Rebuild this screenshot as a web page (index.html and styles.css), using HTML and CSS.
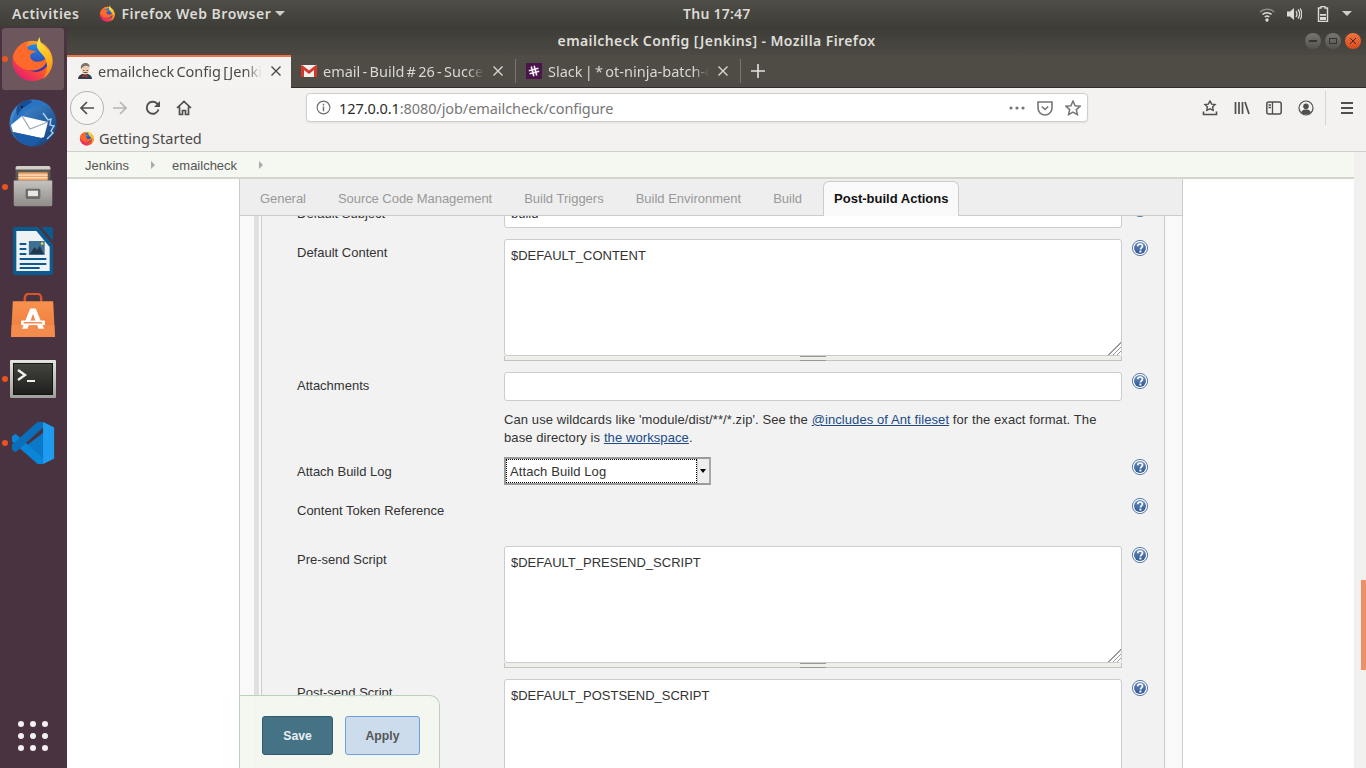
FILE: index.html
```html
<!DOCTYPE html>
<html lang="en">
<head>
    <meta charset="UTF-8">
    <title>emailcheck Config [Jenkins] - Mozilla Firefox</title>
    <link rel="stylesheet" href="styles.css">
</head>
<body>
    <svg class="sprites" width="0" height="0">
        <defs>
            <linearGradient id="fxBody" x1="0.8" y1="0.1" x2="0.2" y2="0.9">
                <stop offset="0" stop-color="#ffb02e"/>
                <stop offset="0.5" stop-color="#ff5a2b"/>
                <stop offset="1" stop-color="#e8226a"/>
            </linearGradient>
            <linearGradient id="fxTail" x1="0.3" y1="0" x2="0.5" y2="1">
                <stop offset="0" stop-color="#ffe93f"/>
                <stop offset="0.6" stop-color="#ffb31f"/>
                <stop offset="1" stop-color="#ff7a1f"/>
            </linearGradient>
            <linearGradient id="fxGlobe" x1="0.5" y1="0" x2="0.5" y2="1">
                <stop offset="0" stop-color="#1d8be8"/>
                <stop offset="1" stop-color="#3b2f9e"/>
            </linearGradient>
            <linearGradient id="tbBird" x1="0" y1="0" x2="1" y2="1">
                <stop offset="0" stop-color="#4a9be0"/>
                <stop offset="1" stop-color="#123a78"/>
            </linearGradient>
            <linearGradient id="helpFill" x1="0" y1="0" x2="0" y2="1">
                <stop offset="0" stop-color="#6d8fbe"/>
                <stop offset="1" stop-color="#2c5596"/>
            </linearGradient>
            <linearGradient id="bagFill" x1="0" y1="0" x2="0" y2="1">
                <stop offset="0" stop-color="#f8914f"/>
                <stop offset="1" stop-color="#ee7a3a"/>
            </linearGradient>
            <linearGradient id="drawerFill" x1="0" y1="0" x2="0" y2="1">
                <stop offset="0" stop-color="#c4c3bf"/>
                <stop offset="1" stop-color="#8d8c88"/>
            </linearGradient>
            <linearGradient id="termFrame" x1="0" y1="0" x2="0" y2="1">
                <stop offset="0" stop-color="#e4e4e1"/>
                <stop offset="1" stop-color="#9f9f9b"/>
            </linearGradient>
            <linearGradient id="termInner" x1="0" y1="0" x2="0" y2="1">
                <stop offset="0" stop-color="#43433f"/>
                <stop offset="1" stop-color="#1f1f1d"/>
            </linearGradient>
        </defs>
        <symbol id="firefox" viewBox="0 0 48 48">
            <circle cx="23.5" cy="26" r="21" fill="url(#fxBody)"/>
            <circle cx="27" cy="23" r="14.5" fill="url(#fxGlobe)"/>
            <path d="M3 22C5 13 11 8 19 6c-2 3-2 6 0 8 2 1 6 1 8 2-2 2-6 2-6 5 0 5 7 7 12 5 3-1 5-3 7-5-1 9-8 15-16 15C12 36 5 30 3 22z" fill="#ff6a2a"/>
            <path d="M31 1c0 6 3 8 7 12 5 5 7 11 6 17-1 7-5 12-10 15 5-6 6-14 3-21-2-5-8-8-9-13 0-4 1-7 3-10z" fill="url(#fxTail)"/>
        </symbol>
        <symbol id="help" viewBox="0 0 16 16">
            <circle cx="8" cy="8" r="7.6" fill="#fff" stroke="#2f5a9b" stroke-width="0.8"/>
            <circle cx="8" cy="8" r="6" fill="url(#helpFill)"/>
            <path d="M5.7 6.3C5.8 4.8 6.8 4 8.1 4c1.4 0 2.4.8 2.4 2.1 0 1.9-2 1.8-2 3.4" fill="none" stroke="#fff" stroke-width="1.7"/>
            <rect x="7.4" y="10.6" width="2" height="1.9" fill="#fff"/>
        </symbol>
        <symbol id="close" viewBox="0 0 12 12">
            <path d="M1.5 1.5l9 9M10.5 1.5l-9 9" stroke="currentColor" stroke-width="1.4" fill="none"/>
        </symbol>
    </svg>

    <header class="panel">
        <div class="panel-left">
            <span class="panel-text activities">Activities</span>
            <svg class="panel-fx"><use href="#firefox"/></svg>
            <span class="panel-text">Firefox Web Browser</span>
            <span class="caret"></span>
        </div>
        <div class="panel-text clock">Thu 17:47</div>
        <div class="panel-right">
            <svg class="tray-icon" viewBox="0 0 16 16">
                <path d="M1 6a10 10 0 0 1 14 0" fill="none" stroke="#8f8e8a" stroke-width="1.5"/>
                <path d="M3.5 8.5a6.5 6.5 0 0 1 9 0" fill="none" stroke="#dcdbd6" stroke-width="1.5"/>
                <path d="M5.8 11a3.2 3.2 0 0 1 4.4 0" fill="none" stroke="#dcdbd6" stroke-width="1.5"/>
                <circle cx="8" cy="14" r="1.7" fill="#dcdbd6"/>
            </svg>
            <svg class="tray-icon" viewBox="0 0 16 16">
                <path d="M1 5.5h3L8 2v12l-4-3.5H1z" fill="#dcdbd6"/>
                <path d="M10 5c1.2 1.8 1.2 4.2 0 6M12 3.5c2 2.6 2 6.4 0 9M14.2 2.500c2 3.4 2 7.600 0 11" fill="none" stroke="#dcdbd6" stroke-width="1.3"/>
            </svg>
            <svg class="tray-icon tray-battery" viewBox="0 0 16 16">
                <path d="M6 .5h4v1.5h2.5v13.500h-9V2H6z" fill="none" stroke="#dcdbd6" stroke-width="1.4"/>
                <path d="M5 8h6v1.8H5zM5 11h6v3H5z" fill="#dcdbd6"/>
            </svg>
            <span class="caret"></span>
        </div>
    </header>

    <div class="desktop">
        <nav class="dock">
            <div class="dock-item active">
                <span class="run-dot"></span>
                <svg class="dock-fx"><use href="#firefox"/></svg>
            </div>
            <div class="dock-item">
                <svg class="bird-icon" viewBox="0 0 48 48">
                    <circle cx="24" cy="24" r="23.5" fill="url(#tbBird)"/>
                    <path d="M4 24C4 12 13 2 25 1c7 0 13 3 17 8-8-3-17-2-23 2-6 4-9 9-10 15z" fill="#2a74c4"/>
                    <path d="M8 8c3-4 7-7 12-7 2 0 3 1 3 2l-9 6c-3 2-4 5-5 8-2-2-2-6-1-9z" fill="#1a4e94"/>
                    <circle cx="13" cy="8" r="1.2" fill="#0b2345"/>
                    <path d="M34 14l5 7 3-1-1 6 4 1-3 5 2 2-6 6" fill="none" stroke="#a9d3f2" stroke-width="1.4"/>
                    <path d="M2 26l11-9 26 6-4 15-3 1L4 33z" fill="#fff"/>
                    <path d="M13 17l8 13 18-7" fill="none" stroke="#9aa7b5" stroke-width="1.2"/>
                    <path d="M4 33l28 6c-2 4-6 7-10 8C13 46 7 41 4 33z" fill="#1c5ba8"/>
                </svg>
            </div>
            <div class="dock-item">
                <span class="run-dot"></span>
                <svg class="dock-icon" viewBox="0 0 48 48">
                    <path d="M5 3a2 2 0 0 1 2-2h34a2 2 0 0 1 2 2v14H5z" fill="#5a5955"/>
                    <path d="M5 3a2 2 0 0 1 2-2h34a2 2 0 0 1 2 2v2H5z" fill="#d0cfca"/>
                    <path d="M8 8h32v9H8z" fill="#f0a25f"/>
                    <path d="M8 11h32M8 14h32" stroke="#fff" stroke-width="1"/>
                    <path d="M3 17h42v26a2 2 0 0 1-2 2H5a2 2 0 0 1-2-2z" fill="url(#drawerFill)"/>
                    <rect x="16" y="26" width="16" height="11" rx="1.5" fill="#6c6b67"/>
                    <rect x="18.5" y="28" width="11" height="6" fill="#e8e7e3"/>
                </svg>
            </div>
            <div class="dock-item">
                <svg class="doc-icon" viewBox="0 0 48 48" preserveAspectRatio="none">
                    <path d="M3 0h27l18 18v27a3 3 0 0 1-3 3H3a3 3 0 0 1-3-3V3a3 3 0 0 1 3-3z" fill="#0c5b8f"/>
                    <path d="M34 0h11a3 3 0 0 1 3 3v11z" fill="#0c5b8f"/>
                    <path d="M4 4h24l16 16v24H4z" fill="#eef2f5"/>
                    <path d="M8 17h8M8 22h8M8 27h8" stroke="#0c5b8f" stroke-width="2"/>
                    <path d="M8 32h32M8 37h32M8 41h24" stroke="#0c5b8f" stroke-width="1.8"/>
                    <rect x="19" y="14" width="19" height="14" fill="#3f6f92"/>
                    <path d="M20 27l6-7 3 3 3-4 5 8z" fill="#233a4d"/>
                    <circle cx="35" cy="16.5" r="1.6" fill="#f5d04a"/>
                </svg>
            </div>
            <div class="dock-item">
                <svg class="dock-icon" viewBox="0 0 48 48">
                    <path d="M15 13V6c0-3 2-5 4-5h10c2 0 4 2 4 5v7" fill="none" stroke="#d9562a" stroke-width="2.6"/>
                    <path d="M2 9h44l2 39H0z" fill="url(#bagFill)"/>
                    <path d="M.8 35h46.4l.8 13H0z" fill="#f28b4b"/>
                    <path d="M21 17h6l9 22h-6l-1.5-4h-9L18 39h-6z" fill="#fff"/>
                    <path d="M24 23l-3 8h6z" fill="#f28445"/>
                    <path d="M11 30h26v5H11z" fill="#fff"/>
                    <path d="M14 31.8h20v1.4H14z" fill="#ee7a3a"/>
                </svg>
            </div>
            <div class="dock-item">
                <span class="run-dot"></span>
                <svg class="terminal-icon" viewBox="0 0 46 38">
                    <rect width="46" height="38" rx="1" fill="url(#termFrame)"/>
                    <rect x="3" y="3" width="40" height="32" fill="#151514"/>
                    <rect x="4" y="4" width="38" height="30" fill="url(#termInner)"/>
                    <path d="M8 10l7 5-7 5" fill="none" stroke="#f0efea" stroke-width="2.4"/>
                    <path d="M17 21h8" stroke="#f0efea" stroke-width="2"/>
                </svg>
            </div>
            <div class="dock-item">
                <span class="run-dot"></span>
                <svg class="dock-icon" viewBox="0 0 48 48">
                    <path d="M35 1l12 6v34l-12 6-20-19 20-15V1z" fill="#0b78c9"/>
                    <path d="M35 1l12 6v34l-12 6z" fill="#1f9cf0"/>
                    <path d="M1 17l4-3 30 27v6l-6 0L1 22z" fill="#0a86d8"/>
                    <path d="M1 31l4 3 30-27V1l-6 0L1 26z" fill="#0a6fb8"/>
                </svg>
            </div>
            <div class="apps-grid">
                <span></span><span></span><span></span>
                <span></span><span></span><span></span>
                <span></span><span></span><span></span>
            </div>
        </nav>

        <div class="window">
            <div class="titlebar">
                <span class="window-title">emailcheck Config [Jenkins] - Mozilla Firefox</span>
                <div class="window-buttons">
                    <span class="win-btn"><i class="win-min"></i></span>
                    <span class="win-btn"><i class="win-max"></i></span>
                    <span class="win-btn win-close"><svg class="win-x"><use href="#close"/></svg></span>
                </div>
            </div>

            <div class="tabstrip">
                <div class="tab tab-current">
                    <svg class="favicon" viewBox="0 0 16 16">
                        <path d="M1 16c0-3 2-4 4-5h6c2 1 4 2 4 5z" fill="#2f3d4a"/>
                        <path d="M6.5 11.5l1.5 2 1.5-2 1.5 1.5-1 1.5-2-1-2 1-1-1.5z" fill="#c0332b"/>
                        <path d="M4 5c0-3 2-5 4.5-5S13 2 12.5 5l-.5 3c-.5 2-2 3.5-4 3.5S5 10 4.5 8z" fill="#f0cdb0"/>
                        <path d="M4 6C3 2 6 0 8.5 0 11 0 13 2 12.5 4 11 3 9 2.5 7.5 3 6 3.5 5 5 4 6z" fill="#77736d"/>
                        <path d="M6 7.5h1.5M9.5 7.5H11M6.5 9.5h4" stroke="#4a3a30" stroke-width=".8"/>
                    </svg>
                    <span class="tab-title">emailcheck Config [Jenkins]</span>
                    <svg class="tab-close"><use href="#close"/></svg>
                </div>
                <div class="tab">
                    <svg class="favicon" viewBox="0 0 16 16">
                        <rect y="2" width="16" height="12" rx="1" fill="#f1efec"/>
                        <path d="M0 3v11h3V7l5 4 5-4v7h3V3l-1-1-7 5.5L1 2z" fill="#d2382c"/>
                    </svg>
                    <span class="tab-title">email - Build # 26 - Successful</span>
                    <svg class="tab-close"><use href="#close"/></svg>
                </div>
                <div class="tab">
                    <svg class="favicon" viewBox="0 0 16 16">
                        <rect width="16" height="16" fill="#4a154b"/>
                        <path d="M6.5 3v10M9.5 3v10M3 6.5h10M3 9.5h10" stroke="#f3eef3" stroke-width="1.6" transform="rotate(-15 8 8)"/>
                    </svg>
                    <span class="tab-title">Slack | * ot-ninja-batch-6 | 3 new</span>
                    <svg class="tab-close"><use href="#close"/></svg>
                </div>
                <svg class="new-tab" viewBox="0 0 14 14"><path d="M7 0v14M0 7h14" stroke="#e3e2dd" stroke-width="1.6"/></svg>
            </div>

            <div class="navbar">
                <div class="nav-left">
                    <span class="back-btn">
                        <svg class="tool-icon" viewBox="0 0 16 16"><path d="M15 8H2M8 2L2 8l6 6" fill="none" stroke="#4f4f4d" stroke-width="1.7"/></svg>
                    </span>
                    <svg class="tool-icon forward" viewBox="0 0 16 16"><path d="M1 8h13M8 2l6 6-6 6" fill="none" stroke="#b5b5b3" stroke-width="1.7"/></svg>
                    <svg class="tool-icon reload" viewBox="0 0 16 16"><path d="M13.5 9.5A6 6 0 1 1 12 3.5l2 2" fill="none" stroke="#4f4f4d" stroke-width="1.9"/><path d="M15 1v6H9z" fill="#4f4f4d"/></svg>
                    <svg class="tool-icon home" viewBox="0 0 16 16"><path d="M1 8l7-6.5L15 8M3.5 6.5V14.5h3v-4h3v4h3V6.5" fill="none" stroke="#4f4f4d" stroke-width="1.7"/></svg>
                </div>
                <div class="urlbar">
                    <svg class="url-info" viewBox="0 0 16 16"><circle cx="8" cy="8" r="6.8" fill="none" stroke="#6e6e6c" stroke-width="1.2"/><path d="M8 7v5M8 4v1.8" stroke="#6e6e6c" stroke-width="1.5"/></svg>
                    <span class="url-text"><b>127.0.0.1</b>:8080/job/emailcheck/configure</span>
                    <div class="url-actions">
                        <svg class="url-dots" viewBox="0 0 16 4"><circle cx="2" cy="2" r="1.6"/><circle cx="8" cy="2" r="1.6"/><circle cx="14" cy="2" r="1.6"/></svg>
                        <svg class="tool-icon" viewBox="0 0 16 16"><path d="M1 2h14v6a7 7 0 0 1-14 0z" fill="none" stroke="#767674" stroke-width="1.6"/><path d="M4.8 6.5L8 9.5l3.2-3" fill="none" stroke="#767674" stroke-width="1.6"/></svg>
                        <svg class="tool-icon" viewBox="0 0 16 16"><path d="M8 1l2.1 4.7 5 .5-3.8 3.4 1.1 5L8 12l-4.4 2.6 1.1-5L.9 6.2l5-.5z" fill="none" stroke="#767674" stroke-width="1.5"/></svg>
                    </div>
                </div>
                <div class="nav-right">
                    <svg class="tool-icon" viewBox="0 0 16 16"><path d="M8 1l1.7 3.2 3.3.4-2.4 2.3.6 3.4L8 8.8l-3.2 1.5.6-3.4L3 4.6l3.3-.4z" fill="none" stroke="#4f4f4d" stroke-width="1.4"/><path d="M1.5 11.5v3h13v-3" fill="none" stroke="#4f4f4d" stroke-width="1.6"/></svg>
                    <svg class="tool-icon" viewBox="0 0 16 16"><path d="M1.5 2v12M5 2v12M8.5 2v12M11 2l4 12" fill="none" stroke="#4f4f4d" stroke-width="1.7"/></svg>
                    <svg class="tool-icon" viewBox="0 0 16 16"><rect x=".8" y="2" width="14.4" height="12" rx="2" fill="none" stroke="#4f4f4d" stroke-width="1.5"/><path d="M6.5 2v12M2.5 5h2.5M2.5 7.5h2.5" stroke="#4f4f4d" stroke-width="1.3"/></svg>
                    <svg class="tool-icon" viewBox="0 0 16 16"><circle cx="8" cy="8" r="7" fill="none" stroke="#4f4f4d" stroke-width="1.2"/><circle cx="8" cy="6.3" r="2.8" fill="#4f4f4d"/><path d="M3 12.5c1-2.5 3-3 5-3s4 .5 5 3c-3 2.5-7 2.5-10 0z" fill="#4f4f4d"/></svg>
                    <span class="nav-divider"></span>
                    <svg class="tool-icon" viewBox="0 0 16 16"><path d="M2 3h12M2 8h12M2 13h12" stroke="#4f4f4d" stroke-width="2"/></svg>
                </div>
            </div>

            <div class="bookmarks">
                <svg class="favicon"><use href="#firefox"/></svg>
                <span>Getting Started</span>
            </div>

            <div class="browser-body">
                <div class="page">
                    <div class="breadcrumbs">
                        <span class="crumb">Jenkins</span>
                        <span class="crumb-arrow"></span>
                        <span class="crumb">emailcheck</span>
                        <span class="crumb-arrow"></span>
                    </div>
                    <div class="config-panel">
                        <div class="config-tabs">
                            <span class="config-tab config-tab-tight">General</span>
                            <span class="config-tab config-tab-tight">Source Code Management</span>
                            <span class="config-tab">Build Triggers</span>
                            <span class="config-tab">Build Environment</span>
                            <span class="config-tab">Build</span>
                            <span class="config-tab config-tab-active">Post-build Actions</span>
                        </div>
                        <div class="section">
                            <div class="section-body">
                                <div class="form-grid">
                                    <label class="field-label label-low">Default Subject</label>
                                    <input class="text-field" type="text" value="build">
                                    <svg class="help-icon help-low"><use href="#help"/></svg>

                                    <label class="field-label">Default Content</label>
                                    <div>
                                        <textarea class="text-area">$DEFAULT_CONTENT</textarea>
                                        <div class="grippie"></div>
                                    </div>
                                    <svg class="help-icon"><use href="#help"/></svg>

                                    <label class="field-label">Attachments</label>
                                    <input class="text-field" type="text">
                                    <svg class="help-icon"><use href="#help"/></svg>

                                    <span></span>
                                    <p class="field-note">Can use wildcards like 'module/dist/**/*.zip'. See the <a href="#">@includes of Ant fileset</a> for the exact format. The base directory is <a href="#">the workspace</a>.</p>
                                    <span></span>

                                    <label class="field-label label-low">Attach Build Log</label>
                                    <div class="select-box">
                                        <span class="select-value">Attach Build Log</span>
                                        <span class="select-arrow"></span>
                                    </div>
                                    <svg class="help-icon help-low"><use href="#help"/></svg>

                                    <label class="field-label label-low token-label">Content Token Reference</label>
                                    <span></span>
                                    <svg class="help-icon help-low"><use href="#help"/></svg>

                                    <label class="field-label">Pre-send Script</label>
                                    <div>
                                        <textarea class="text-area">$DEFAULT_PRESEND_SCRIPT</textarea>
                                        <div class="grippie"></div>
                                    </div>
                                    <svg class="help-icon"><use href="#help"/></svg>

                                    <label class="field-label">Post-send Script</label>
                                    <div>
                                        <textarea class="text-area">$DEFAULT_POSTSEND_SCRIPT</textarea>
                                        <div class="grippie"></div>
                                    </div>
                                    <svg class="help-icon"><use href="#help"/></svg>
                                </div>
                            </div>
                        </div>
                        <div class="save-bar">
                            <button class="btn btn-save">Save</button>
                            <button class="btn btn-apply">Apply</button>
                        </div>
                    </div>
                </div>
                <div class="scrollbar"><div class="scroll-thumb"></div></div>
            </div>
        </div>
    </div>
</body>
</html>
```

FILE: styles.css
```css
* {
    box-sizing: border-box;
}

html, body {
    margin: 0;
    height: 768px;
    overflow: hidden;
}

body {
    font-family: "Noto Sans", sans-serif;
    display: flex;
    flex-direction: column;
    background: #4a3340;
}

.sprites {
    position: absolute;
}

/* gnome top bar */
.panel {
    height: 27px;
    display: grid;
    grid-template-columns: 683px auto 1fr;
    align-items: center;
    background: linear-gradient(#4f4d47, #3f3d38);
    color: #dcdbd6;
}

.panel-text {
    font-size: 14px;
    font-weight: 600;
    letter-spacing: 0.5px;
    white-space: nowrap;
}

.clock {
    letter-spacing: 0.25px;
}

.panel-left {
    display: flex;
    align-items: center;
    padding-left: 12px;
}

.activities {
    margin-right: 20px;
}

.panel-fx {
    width: 17px;
    height: 17px;
    margin-right: 5px;
}

.caret {
    width: 0;
    height: 0;
    margin-left: 4px;
    border-left: 5px solid transparent;
    border-right: 5px solid transparent;
    border-top: 5px solid #cfcec9;
}

.panel-right {
    display: flex;
    align-items: center;
    justify-content: flex-end;
    gap: 11px;
    padding-right: 14px;
}

.tray-icon {
    width: 16px;
    height: 16px;
}

.tray-battery {
    margin-left: 2px;
}

.panel-right .caret {
    margin-left: 0;
}

/* launcher */
.desktop {
    flex: 1;
    display: flex;
    min-height: 0;
}

.dock {
    width: 67px;
    flex: none;
    display: flex;
    flex-direction: column;
    background: #4a3340;
}

.dock-item {
    height: 64px;
    flex: none;
    position: relative;
    display: flex;
    align-items: center;
    justify-content: center;
    padding-right: 1px;
}

.dock-item.active::before {
    content: "";
    position: absolute;
    left: 2px;
    right: 3px;
    top: 1px;
    bottom: 1px;
    background: #6e575c;
    border-radius: 3px;
}

.run-dot {
    position: absolute;
    left: 2px;
    top: 29px;
    width: 6px;
    height: 6px;
    border-radius: 50%;
    background: #e95420;
    z-index: 1;
}

.dock-fx {
    width: 46px;
    height: 46px;
    position: relative;
}

.dock-icon {
    width: 44px;
    height: 44px;
}

.bird-icon {
    width: 48px;
    height: 48px;
}

.doc-icon {
    width: 40px;
    height: 48px;
}

.terminal-icon {
    width: 46px;
    height: 38px;
}

.apps-grid {
    margin-top: auto;
    height: 64px;
    display: grid;
    grid-template-columns: repeat(3, 6px);
    grid-template-rows: repeat(3, 6px);
    gap: 6px;
    justify-content: center;
    align-content: center;
    padding-right: 1px;
}

.apps-grid span {
    background: #f2f0f0;
    border-radius: 50%;
}

/* browser window */
.window {
    flex: 1;
    min-width: 0;
    display: flex;
    flex-direction: column;
}

.titlebar {
    height: 28px;
    flex: none;
    position: relative;
    display: flex;
    align-items: center;
    justify-content: center;
    padding-bottom: 2px;
    background: linear-gradient(#3d3c37, #4c4943);
}

.window-title {
    color: #dfded9;
    font-size: 14px;
    font-weight: 600;
    letter-spacing: 0.41px;
}

.window-buttons {
    position: absolute;
    right: 5px;
    top: 6px;
    display: flex;
    gap: 4px;
}

.win-btn {
    width: 16px;
    height: 16px;
    border-radius: 50%;
    background: linear-gradient(#77756f, #55534d);
    display: flex;
    align-items: center;
    justify-content: center;
}

.win-min {
    width: 8px;
    height: 1.5px;
    background: #35342f;
}

.win-max {
    width: 8px;
    height: 6px;
    border: 1px solid #35342f;
}

.win-close {
    background: linear-gradient(#f0743f, #d9491c);
}

.win-x {
    width: 8px;
    height: 8px;
    color: #3a2a20;
}

.tabstrip {
    height: 33px;
    flex: none;
    display: flex;
    align-items: center;
    background: #4f4c45;
    border-bottom: 1px solid #2f2e2a;
}

.tab {
    width: 225px;
    height: 32px;
    display: flex;
    align-items: center;
    padding: 0 11px 0 10px;
    color: #d8d7d2;
    font-size: 14.5px;
    word-spacing: -1.5px;
    border-right: 1px solid #79776f;
    border-image: linear-gradient(transparent 15%, #79776f 15%, #79776f 85%, transparent 85%) 1;
}

.tab-current {
    width: 224px;
    height: 33px;
    margin-bottom: -1px;
    padding: 0 9px 3px 10px;
    color: #4a4a48;
    background: #f4f3f1;
    border: 0;
    border-top: 2px solid #ee7148;
}

.favicon {
    width: 16px;
    height: 16px;
    flex: none;
    margin-right: 6px;
}

.tab-current .favicon {
    margin-right: 5px;
}

.tab-title {
    flex: 1;
    min-width: 0;
    overflow: hidden;
    white-space: nowrap;
    -webkit-mask-image: linear-gradient(to right, #000 calc(100% - 16px), transparent);
    mask-image: linear-gradient(to right, #000 calc(100% - 16px), transparent);
}

.tab-close {
    width: 12px;
    height: 12px;
    flex: none;
    margin-left: 8px;
}

.new-tab {
    width: 14px;
    height: 14px;
    margin-left: 10px;
}

.navbar {
    height: 39px;
    flex: none;
    display: flex;
    align-items: center;
    background: #f3f2f0;
    color: #4f4f4d;
}

.nav-left {
    width: 239px;
    display: flex;
    align-items: center;
    padding-left: 3px;
}

.tool-icon {
    width: 16px;
    height: 16px;
    flex: none;
}

.back-btn {
    width: 34px;
    height: 34px;
    border: 1px solid #b4b3b1;
    border-radius: 50%;
    background: #f7f6f4;
    display: flex;
    align-items: center;
    justify-content: center;
}

.forward {
    margin-left: 8px;
}

.reload {
    margin-left: 17px;
}

.home {
    margin-left: 15px;
}

.urlbar {
    width: 782px;
    height: 29px;
    flex: none;
    display: flex;
    align-items: center;
    background: #fff;
    border: 1px solid #cfcecb;
    border-radius: 4px;
    box-shadow: 0 1px 2px rgba(0, 0, 0, 0.08);
    padding: 0 6px 0 9px;
}

.url-info {
    width: 15px;
    height: 15px;
    flex: none;
}

.url-text {
    margin-left: 8px;
    font-size: 14.5px;
    letter-spacing: -0.08px;
    color: #777;
    white-space: nowrap;
}

.url-text b {
    color: #2b2b2b;
    font-weight: 400;
}

.url-actions {
    margin-left: auto;
    display: flex;
    align-items: center;
    gap: 12px;
}

.url-dots {
    width: 16px;
    height: 4px;
    fill: #767674;
}

.nav-right {
    flex: 1;
    display: flex;
    align-items: center;
    padding-left: 114px;
    gap: 16px;
}

.nav-divider {
    width: 1px;
    height: 34px;
    background: #d6d5d2;
    margin: 0 -3px 0 -5px;
}

.bookmarks {
    height: 25px;
    flex: none;
    display: flex;
    align-items: center;
    padding: 0 0 3px 12px;
    background: #f3f2f0;
    border-bottom: 1px solid #cfcfcb;
    color: #4a4a48;
    font-size: 14.5px;
    word-spacing: -1.5px;
}

.bookmarks .favicon {
    margin-right: 4px;
}

/* jenkins page */
.browser-body {
    flex: 1;
    min-height: 0;
    display: flex;
    background: #fff;
}

.page {
    flex: 1;
    min-width: 0;
    overflow: hidden;
    font-family: "Liberation Sans", Arial, sans-serif;
    font-size: 13px;
    color: #333;
}

.scrollbar {
    width: 12px;
    flex: none;
    background: #f1f0ee;
    padding-top: 428px;
}

.scroll-thumb {
    width: 5px;
    height: 90px;
    margin-left: 7px;
    background: #f08e68;
}

.breadcrumbs {
    height: 27px;
    display: flex;
    align-items: center;
    padding: 1px 0 0 18px;
    background: #f5f8f1;
    border-bottom: 2px solid #d3d6cf;
    color: #555;
}

.crumb-arrow {
    width: 0;
    height: 0;
    margin: 0 17px 0 22px;
    border-left: 4px solid #aaa;
    border-top: 4px solid transparent;
    border-bottom: 4px solid transparent;
}

.config-panel {
    position: relative;
    width: 944px;
    height: 600px;
    margin-left: 172px;
    background: #f9f9f9;
    border-left: 1px solid #ccc;
    border-right: 1px solid #ccc;
}

.config-tabs {
    position: relative;
    z-index: 1;
    height: 37px;
    display: flex;
    align-items: flex-end;
    gap: 32px;
    padding-left: 20px;
    background: #eee;
    border-bottom: 1px solid #ccc;
    color: #999;
}

.config-tab {
    line-height: 33px;
    white-space: nowrap;
}

.config-tab-tight {
    letter-spacing: -0.05px;
}

.config-tab-active {
    height: 35px;
    margin: 0 -11px -1px;
    padding: 0 10px;
    background: #f9f9f9;
    border: 1px solid #ccc;
    border-bottom: 0;
    border-radius: 6px 6px 0 0;
    color: #111;
    font-weight: 700;
}

.section {
    margin-left: 14px;
    padding-left: 2px;
    padding-right: 17px;
    border-left: 5px solid #e0e0e0;
}

.section-body {
    height: 600px;
    background: #f2f2f2;
    border-left: 1px solid #ccc;
    border-right: 1px solid #ccc;
    padding-left: 35px;
}

.form-grid {
    display: grid;
    grid-template-columns: 207px 618px 26px;
    row-gap: 11px;
    margin-top: -17px;
    align-items: start;
}

.field-label {
    padding-top: 6px;
    line-height: 15px;
}

.label-low {
    padding-top: 7px;
}

.token-label {
    height: 39px;
}

.text-field {
    display: block;
    width: 618px;
    height: 29px;
    padding: 0 6px;
    font: 13px "Liberation Sans", Arial, sans-serif;
    color: #333;
    background: #fff;
    border: 1px solid #ccc;
    border-radius: 3px;
}

.text-area {
    display: block;
    width: 618px;
    height: 117px;
    padding: 8px 6px;
    font: 13px/15px "Liberation Sans", Arial, sans-serif;
    color: #333;
    background: #fff;
    border: 1px solid #ccc;
    border-radius: 3px;
    resize: vertical;
}

.text-area::-webkit-resizer {
    background:
        linear-gradient(135deg, #fff 50%, transparent 50%),
        repeating-linear-gradient(135deg, #999 0, #999 1px, #fff 1px, #fff 3px);
}

.grippie {
    height: 5px;
    position: relative;
    background: #eeeeea;
    border: 1px solid #c4c4bf;
    border-top: 0;
}

.grippie::after {
    content: "";
    position: absolute;
    left: 295px;
    top: 0;
    width: 26px;
    height: 3px;
    border-top: 1px solid #999;
    border-bottom: 1px solid #999;
}

.help-icon {
    width: 16px;
    height: 16px;
    margin: 1px 0 0 10px;
    overflow: visible;
}

.help-low {
    margin-top: 2px;
}

.field-note {
    margin: -1px 0 -1px;
    line-height: 18px;
    letter-spacing: 0.09px;
    color: #333;
}

.field-note a {
    color: #204a87;
}

.select-box {
    width: 207px;
    height: 28px;
    display: flex;
    background: #fff;
    border: 2px solid #9a9a9a;
    border-right-color: #a8a8a8;
}

.select-value {
    flex: 1;
    line-height: 24px;
    padding-left: 3px;
    letter-spacing: 0.1px;
    border: 1px dotted #000;
}

.select-arrow {
    width: 12px;
    position: relative;
    background: #eee;
    border-left: 1px solid #ccc;
}

.select-arrow::after {
    content: "";
    position: absolute;
    left: 2px;
    top: 10px;
    border-left: 3px solid transparent;
    border-right: 3px solid transparent;
    border-top: 4px solid #000;
}

.save-bar {
    position: absolute;
    z-index: 2;
    left: -1px;
    top: 516px;
    width: 201px;
    height: 81px;
    display: flex;
    gap: 12px;
    padding: 20px 0 0 22px;
    background: rgba(244, 247, 240, 0.92);
    border: 1px solid #bcd0c0;
    border-bottom: 0;
    border-radius: 0 10px 0 0;
}

.btn {
    height: 39px;
    font: 700 12.2px "Liberation Sans", Arial, sans-serif;
    border-radius: 3px;
}

.btn-save {
    width: 71px;
    color: #e8eff3;
    background: #457385;
    border: 1px solid #315a6d;
}

.btn-apply {
    width: 75px;
    color: #555;
    background: #ccdcec;
    border: 1px solid #6f9fd6;
}
```
